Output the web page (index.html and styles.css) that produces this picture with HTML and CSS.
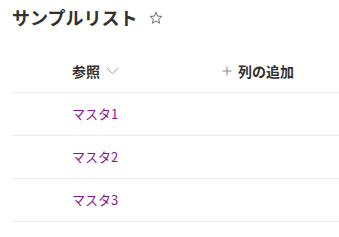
FILE: index.html
```html
<!DOCTYPE html>
<html lang="ja">
<head>
<meta charset="utf-8">
<link rel="stylesheet" href="styles.css">
</head>
<body>
<div class="page">
  <div class="title-row">
    <h1 class="title">サンプルリスト</h1>
    <svg class="star" width="14" height="14" viewBox="0 0 14 14"><path d="M7 1.2 L8.6 5.1 L12.8 5.4 L9.6 8.1 L10.6 12.2 L7 10 L3.4 12.2 L4.4 8.1 L1.2 5.4 L5.4 5.1 Z" fill="none" stroke="#605e5c" stroke-width="0.9" stroke-linejoin="round"/></svg>
  </div>
  <div class="list">
    <div class="row header">
      <div class="cell col1"><span class="hd">参照</span><svg class="chev" width="13" height="8" viewBox="0 0 13 8"><path d="M0.8 1 L6.5 6.6 L12.2 1" fill="none" stroke="#a19f9d" stroke-width="1"/></svg></div>
      <div class="cell col2"><svg class="plus" width="10" height="10" viewBox="0 0 10 10"><path d="M5 0.5 V9.5 M0.5 5 H9.5" stroke="#8a8886" stroke-width="1"/></svg><span class="hd">列の追加</span></div>
    </div>
    <div class="row"><div class="cell col1"><span class="link">マスタ1</span></div><div class="cell col2"></div></div>
    <div class="row"><div class="cell col1"><span class="link">マスタ2</span></div><div class="cell col2"></div></div>
    <div class="row"><div class="cell col1"><span class="link">マスタ3</span></div><div class="cell col2"></div></div>
  </div>
</div>
</body>
</html>
```
FILE: styles.css
```css
html, body {
  margin: 0;
  padding: 0;
  background: #ffffff;
}
body {
  font-family: "Noto Sans CJK JP", "Noto Sans", sans-serif;
  color: #323130;
}
.page {
  padding-left: 12px;
}
.title-row {
  display: flex;
  align-items: center;
  height: 34px;
  gap: 12px;
}
.title {
  margin: 0;
  font-size: 18px;
  font-weight: 700;
  line-height: 34px;
  color: #323130;
}
.star {
  display: block;
  margin-top: 1px;
}
.list {
  margin-top: 16px;
}
.row {
  display: grid;
  grid-template-columns: 210px 1fr;
  height: 42px;
  border-bottom: 1px solid #edebe9;
  align-items: center;
}
.cell {
  display: flex;
  align-items: center;
}
.col1 {
  padding-left: 60px;
}
.col2 {
  padding-left: 0;
}
.hd {
  font-size: 14px;
  font-weight: 600;
  line-height: 20px;
  color: #323130;
}
.chev {
  display: block;
  margin-left: 6px;
}
.plus {
  display: block;
  margin-right: 6px;
}
.link {
  font-size: 13px;
  line-height: 20px;
  color: #881798;
}
```
